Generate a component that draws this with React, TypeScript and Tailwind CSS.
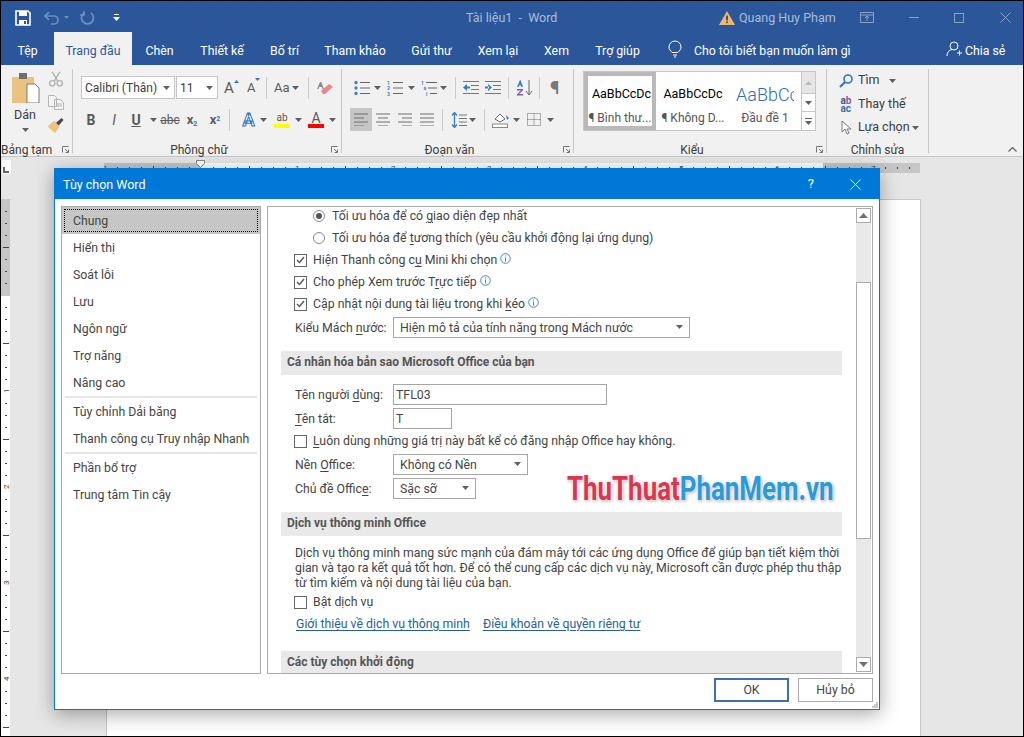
import React from "react";

const F = "font-['Roboto','Noto_Sans',sans-serif]";

function Caret({ c = "#5f5f5f" }: { c?: string }) {
  return <svg width="7" height="4" viewBox="0 0 7 4" className="shrink-0"><path d="M0 0h7L3.5 4z" fill={c} /></svg>;
}

function TitleBar() {
  return (
    <div className="flex h-[31px] items-center bg-[#2b579a] pt-[2px] text-[12.5px] text-[#a9bdd8]">
      <svg width="16" height="16" viewBox="0 0 16 16" className="ml-[14px] shrink-0"><path d="M1 1h12l2 2v12H1z" fill="none" stroke="#fff" strokeWidth="1.6" /><rect x="4" y="1" width="8" height="5" fill="#fff" /><rect x="4" y="10" width="8" height="5" fill="#fff" /><rect x="9" y="11" width="2" height="3" fill="#2b579a" /></svg>
      <svg width="16" height="14" viewBox="0 0 16 14" className="ml-[13px] shrink-0"><path d="M5 1 1 5l4 4M1 5h9a4 4 0 0 1 0 8H7" fill="none" stroke="#6f8fbd" strokeWidth="1.7" /></svg>
      <svg width="5" height="3" viewBox="0 0 5 3" className="ml-[4px] shrink-0"><path d="M0 0h5L2.5 3z" fill="#6f8fbd" /></svg>
      <svg width="15" height="15" viewBox="0 0 15 15" className="ml-[11px] shrink-0"><path d="M4 3a6 6 0 1 0 7 0M4 1v4H0" fill="none" stroke="#6f8fbd" strokeWidth="1.7" /></svg>
      <svg width="7" height="7" viewBox="0 0 7 7" className="ml-[18px] shrink-0"><path d="M1 0h5v1H1zM0 3h7L3.5 7z" fill="#fff" /></svg>
      <div className="w-[346px] shrink-0" />
      <span className="w-[88px] shrink-0 whitespace-nowrap pt-[2px]">Tài liệu1&nbsp; -&nbsp; Word</span>
      <div className="w-[165px] shrink-0" />
      <svg width="16" height="14" viewBox="0 0 16 14" className="shrink-0"><path d="M8 0l8 14H0z" fill="#e9b872" /><rect x="7.2" y="4.5" width="1.6" height="5" fill="#3a3a3a" /><rect x="7.2" y="10.5" width="1.6" height="1.6" fill="#3a3a3a" /></svg>
      <span className="ml-[4px] w-[96px] shrink-0 whitespace-nowrap pt-[2px]">Quang Huy Phạm</span>
      <svg width="14" height="11" viewBox="0 0 14 11" className="ml-[25px] shrink-0"><path d="M.5.5h13v10H.5zM.5 3h13M7 9V4.5M5 6l2-2 2 2" fill="none" stroke="#88a3c9" /></svg>
      <div className="ml-[35px] h-px w-[10px] shrink-0 bg-[#88a3c9]" />
      <div className="ml-[35px] h-[10px] w-[10px] shrink-0 border border-[#88a3c9]" />
      <svg width="11" height="11" viewBox="0 0 11 11" className="ml-[36px] shrink-0"><path d="M.5.5l10 10M10.5.5l-10 10" stroke="#88a3c9" /></svg>
    </div>
  );
}

const tabs: [string, number][] = [["Tệp", 53], ["Trang đầu", 78], ["Chèn", 55], ["Thiết kế", 70], ["Bố trí", 55], ["Tham khảo", 86], ["Gửi thư", 67], ["Xem lại", 66], ["Xem", 51], ["Trợ giúp", 71]];

function TabRow() {
  return (
    <div className="flex h-[33px] bg-[#2b579a] text-[12.3px] text-white">
      {tabs.map(([t, w]) => (
        <div key={t} style={{ width: w }} className={"flex items-center justify-center whitespace-nowrap pt-[5px] " + (t === "Trang đầu" ? "bg-[#f1f1f1] text-[#2b579a]" : "")}>{t}</div>
      ))}
      <svg width="14" height="18" viewBox="0 0 14 18" className="ml-[15px] mt-[8px] shrink-0"><path d="M4 12.5C2.5 10.5 1 9.5 1 7a6 6 0 0 1 12 0c0 2.5-1.5 3.5-3 5.5zM5 15h4M6 17h2" fill="none" stroke="#fff" /></svg>
      <span className="ml-[12px] flex w-[252px] shrink-0 items-center whitespace-nowrap pt-[5px]">Cho tôi biết bạn muốn làm gì</span>
      <svg width="16" height="16" viewBox="0 0 16 16" className="mt-[9px] shrink-0"><circle cx="8" cy="5" r="4" fill="none" stroke="#fff" /><path d="M1 15c0-4 2-6 5-6.5M11 12h5M13.5 9.5v5" fill="none" stroke="#fff" /></svg>
      <span className="ml-[3px] flex items-center whitespace-nowrap pt-[5px]">Chia sẻ</span>
    </div>
  );
}

function Sep() {
  return <div className="mb-[3px] mt-[4px] w-px shrink-0 bg-[#c6c6c6]" />;
}
function MiniSep({ className = "" }: { className?: string }) {
  return <div className={"mx-[4px] h-[22px] w-px shrink-0 bg-[#c9c9c9] " + className} />;
}
function Launcher() {
  return <svg width="7" height="7" viewBox="0 0 7 7" className="absolute bottom-[3px] right-[3px]"><path d="M.5 6.5v-6h6M3 3l3.5 3.5M6.5 3.5v3h-3" fill="none" stroke="#777" /></svg>;
}
function G({ w, label, children, launcher = true, className = "", labelClass = "right-[16px]" }: { w: number; label: string; children: React.ReactNode; launcher?: boolean; className?: string; labelClass?: string }) {
  return (
    <div style={{ width: w }} className={"relative h-full shrink-0 " + className}>
      {children}
      <div className={"absolute -bottom-px left-0 whitespace-nowrap text-center text-[12px] leading-[14px] text-[#3c3c3c] " + labelClass}>{label}</div>
      {launcher && <Launcher />}
    </div>
  );
}

function Clipboard() {
  return (
    <G w={71} label="Bảng tạm" className="flex" labelClass="right-[22px]">
      <div className="ml-[9px] mt-[8px] flex w-[30px] flex-col items-center">
        <svg width="29" height="30" viewBox="0 0 29 30"><path d="M1 4h22v26H1z" fill="#e9c37f" /><rect x="8" y="0" width="8" height="6" fill="#6f6f6f" /><path d="M16 11h8l4 4v15H16z" fill="#fff" stroke="#7a7a7a" /></svg>
        <span className="mt-[3px] text-[12.5px] leading-[17px] text-[#3c3c3c]">Dán</span>
        <div className="mt-[5px]"><Caret /></div>
      </div>
      <div className="ml-[7px] mt-[6px] flex flex-col items-center gap-[8px]">
        <svg width="16" height="16" viewBox="0 0 16 17"><path d="M4 1l6 10M12 1L6 11" stroke="#b5b5b5" strokeWidth="1.6" fill="none" /><circle cx="4" cy="13" r="2.8" fill="none" stroke="#b5b5b5" strokeWidth="1.5" /><circle cx="12" cy="13" r="2.8" fill="none" stroke="#b5b5b5" strokeWidth="1.5" /></svg>
        <svg width="16" height="15" viewBox="0 0 16 15"><path d="M.5.5h6l2 2v9h-8zM6.5 4.5h6l3 3v7h-9z" fill="#f4f4f4" stroke="#b5b5b5" /><path d="M8 9h6M8 11h6" stroke="#b5b5b5" /></svg>
        <svg width="17" height="15" viewBox="0 0 17 16"><path d="M0 9l7-6 6 6-5 7z" fill="#e9c37f" /><path d="M9 5l6-5 2 2-5 6z" fill="#4a4a4a" /></svg>
      </div>
    </G>
  );
}

function FontGroup() {
  return (
    <G w={268} label="Phông chữ">
      <div className="ml-[8px] mt-[11px] flex h-[23px] items-center">
        <div className="flex h-[23px] w-[94px] shrink-0 items-center justify-between border border-[#c6c6c6] bg-white pl-[3px] pr-[4px] text-[12px] text-[#3c3c3c]"><span className="whitespace-nowrap">Calibri (Thân)</span><Caret /></div>
        <div className="ml-[1px] flex h-[23px] w-[42px] shrink-0 items-center justify-between border border-[#c6c6c6] bg-white pl-[3px] pr-[4px] text-[12px] text-[#3c3c3c]"><span>11</span><Caret /></div>
        <div className="ml-[6px] flex w-[20px] shrink-0 items-start text-[15px] leading-[18px] text-[#5a5a5a]">A<svg width="5" height="3" viewBox="0 0 5 3" className="mt-[1px]"><path d="M0 3h5L2.5 0z" fill="#2f77c4" /></svg></div>
        <div className="ml-[3px] flex w-[16px] shrink-0 items-start text-[13px] leading-[20px] text-[#5a5a5a]">A<svg width="5" height="3" viewBox="0 0 5 3"><path d="M0 0h5L2.5 3z" fill="#2f77c4" /></svg></div>
        <MiniSep className="ml-[3px]" />
        <span className="ml-[3px] w-[17px] shrink-0 text-[13px] text-[#5a5a5a]">Aa</span>
        <div className="ml-[1px]"><Caret /></div>
        <MiniSep className="ml-[9px]" />
        <svg width="16" height="16" viewBox="0 0 16 16" className="ml-[4px] shrink-0"><path d="M3 2L0 9h1.5l.7-2h2.6l.7 2H7L4.2 2z" fill="#8a8a8a" /><path d="M4 11l8-7 4 3-8 7H6z" fill="#e68890" /></svg>
      </div>
      <div className="ml-[8px] mt-[9px] flex h-[23px] items-center text-[#5a5a5a]">
        <span className="w-[20px] shrink-0 text-center text-[14px] font-bold leading-none">B</span>
        <span className="ml-[3px] w-[20px] shrink-0 text-center text-[14px] italic leading-none">I</span>
        <span className="ml-[2px] w-[20px] shrink-0 text-center text-[14px] font-bold leading-none underline">U</span>
        <div className="ml-[4px]"><Caret /></div>
        <span className="ml-[2px] w-[22px] shrink-0 text-center text-[12px] leading-none line-through">abc</span>
        <span className="ml-[1px] w-[20px] shrink-0 text-center text-[13px] font-bold leading-none">x<sub className="text-[7px] text-[#2f77c4]">2</sub></span>
        <span className="ml-[3px] w-[20px] shrink-0 text-center text-[13px] font-bold leading-none">x<sup className="text-[7px] text-[#2f77c4]">2</sup></span>
        <MiniSep />
        <span className="ml-[5px] w-[19px] shrink-0 text-center text-[18px] font-bold leading-none text-white [-webkit-text-stroke:1px_#2f77c4]">A</span>
        <div className="ml-[2px]"><Caret /></div>
        <div className="ml-[7px] flex w-[16px] shrink-0 flex-col items-center"><span className="text-[10px] leading-[11px]">ab</span><div className="mt-[1px] h-[4px] w-[16px] bg-[#ffff00]" /></div>
        <div className="ml-[5px]"><Caret /></div>
        <div className="ml-[6px] flex w-[16px] shrink-0 flex-col items-center"><span className="text-[14px] leading-[12px]">A</span><div className="h-[4px] w-[16px] bg-[#ff0000]" /></div>
        <div className="ml-[5px]"><Caret /></div>
      </div>
    </G>
  );
}

function Lines({ kind }: { kind: "l" | "c" | "r" | "j" }) {
  const rows = [14, 10, 14, 10];
  return (
    <svg width="14" height="13" viewBox="0 0 14 13">
      {rows.map((r, i) => {
        const w = kind === "j" ? 14 : r;
        const x = kind === "c" ? (14 - w) / 2 : kind === "r" ? 14 - w : 0;
        return <rect key={i} x={x} y={i * 4 + 0.5} width={w} height="1" fill="#6e6e6e" />;
      })}
    </svg>
  );
}
function ListIcon({ kind }: { kind: "b" | "n" | "m" }) {
  const dots = kind === "n" ? ["1", "2", "3"] : ["1", "a", "i"];
  return (
    <svg width="16" height="16" viewBox="0 0 16 16" className="shrink-0">
      {[0, 1, 2].map((i) => kind === "b"
        ? <circle key={i} cx="2" cy={2.5 + i * 5.5} r="1.7" fill="#4a7fb8" />
        : <text key={i} x={kind === "m" ? i * 2.5 : 0} y={4.5 + i * 5.5} fontSize="5" fontWeight="bold" fill="#3f7cc0">{dots[i]}</text>)}
      {[0, 1, 2].map((i) => <rect key={i} x={kind === "m" ? 5 + i * 2 : 6} y={2 + i * 5.5} width={kind === "m" ? 11 - i * 2 : 10} height="1" fill="#666" />)}
    </svg>
  );
}

function Paragraph() {
  return (
    <G w={231} label="Đoạn văn">
      <div className="ml-[12px] mt-[11px] flex h-[23px] items-center">
        <ListIcon kind="b" /><div className="ml-[4px]"><Caret /></div>
        <div className="ml-[6px]"><ListIcon kind="n" /></div><div className="ml-[5px]"><Caret /></div>
        <div className="ml-[6px]"><ListIcon kind="m" /></div><div className="ml-[3px]"><Caret /></div>
        <MiniSep className="ml-[8px]" />
        <svg width="16" height="13" viewBox="0 0 16 13" className="ml-[3px] shrink-0"><path d="M0 .5h16M8 4.5h8M8 8.5h8M0 12.5h16" stroke="#777" /><path d="M0 6.5l4-3.5v7zM3 5.5h4v2H3z" fill="#3f7cc0" /></svg>
        <svg width="16" height="13" viewBox="0 0 16 13" className="ml-[6px] shrink-0"><path d="M0 .5h16M8 4.5h8M8 8.5h8M0 12.5h16" stroke="#777" /><path d="M7 6.5L3 3v7zM0 5.5h4v2H0z" fill="#3f7cc0" /></svg>
        <MiniSep className="ml-[7px]" />
        <svg width="16" height="16" viewBox="0 0 16 16" className="ml-[4px] shrink-0"><path d="M3 0L0 7h1.5l.5-1.5h2L4.5 7H6L3.5 0z" fill="#3f7cc0" /><path d="M0 9h6v1.2L2 14h4v1.5H0v-1.2L4 10.5H0z" fill="#8a57a8" /><path d="M12 0v14M9 11l3 4 3-4" fill="none" stroke="#666" /></svg>
        <MiniSep className="ml-[6px]" />
        <span className="ml-[6px] text-[19px] font-bold leading-none text-[#777]">¶</span>
      </div>
      <div className="ml-[8px] mt-[9px] flex h-[23px] items-center">
        <div className="flex h-[23px] w-[22px] shrink-0 items-center justify-center bg-[#c6c6c6]"><Lines kind="l" /></div>
        <div className="flex h-[23px] w-[22px] shrink-0 items-center justify-center"><Lines kind="c" /></div>
        <div className="flex h-[23px] w-[22px] shrink-0 items-center justify-center"><Lines kind="r" /></div>
        <div className="flex h-[23px] w-[22px] shrink-0 items-center justify-center"><Lines kind="j" /></div>
        <MiniSep />
        <svg width="16" height="16" viewBox="0 0 16 16" className="ml-[4px] shrink-0"><path d="M3.5 1v14M1 3.5l2.5-3 2.5 3M1 12.5l2.5 3 2.5-3" fill="none" stroke="#3f7cc0" strokeWidth="1.3" /><path d="M8 3h8M8 6.5h8M8 10h8M8 13.5h8" stroke="#777" /></svg>
        <div className="ml-[2px]"><Caret /></div>
        <MiniSep className="ml-[8px]" />
        <svg width="17" height="16" viewBox="0 0 17 16" className="ml-[3px] shrink-0"><path d="M3 7l5-5 5 5-5 3z" fill="#fff" stroke="#666" /><path d="M14 3l3 3-2 2z" fill="#3f7cc0" /><rect x=".5" y="12" width="15" height="3.5" fill="#fff" stroke="#888" /></svg>
        <div className="ml-[4px]"><Caret /></div>
        <svg width="14" height="13" viewBox="0 0 14 13" className="ml-[7px] shrink-0"><path d="M.5.5h13v12H.5zM7 .5v12M.5 6.5h13" fill="none" stroke="#666" strokeDasharray="1 1" /></svg>
        <div className="ml-[6px]"><Caret /></div>
      </div>
    </G>
  );
}

function Styles() {
  return (
    <G w={252} label="Kiểu">
      <div className="ml-[9px] mt-[6px] flex h-[60px] w-[233px] border border-[#c6c6c6] bg-white">
        <div className="flex h-[58px] w-[72px] shrink-0 flex-col items-center overflow-hidden border-[4px] border-[#b9b9b9] pt-[1px]">
          <div className="flex h-[34px] w-full shrink-0 items-center justify-center overflow-hidden whitespace-nowrap pl-[3px] text-[12.5px] text-black">AaBbCcDc</div>
          <div className="whitespace-nowrap text-[12px] leading-[14px] text-[#555]">¶ Bình thư...</div>
        </div>
        <div className="flex h-[58px] w-[74px] shrink-0 flex-col items-center overflow-hidden pt-[6px]">
          <div className="flex h-[32px] w-full shrink-0 items-center justify-center overflow-hidden whitespace-nowrap text-[12.5px] text-black">AaBbCcDc</div>
          <div className="whitespace-nowrap text-[12px] leading-[17px] text-[#555]">¶ Không D...</div>
        </div>
        <div className="flex h-[58px] w-[70px] shrink-0 flex-col items-center overflow-hidden pt-[6px]">
          <div className="flex h-[32px] w-[58px] shrink-0 items-center overflow-hidden whitespace-nowrap text-[18px] font-light text-[#2f6eb5]">AaBbCcD</div>
          <div className="whitespace-nowrap text-[12px] leading-[17px] text-[#555]">Đầu đề 1</div>
        </div>
        <div className="ml-auto flex w-[14px] shrink-0 flex-col">
          <div className="flex h-[21px] items-center justify-center border-l border-[#c6c6c6] bg-[#e6e6e6]"><svg width="7" height="4" viewBox="0 0 7 4"><path d="M0 4h7L3.5 0z" fill="#bbb" /></svg></div>
          <div className="flex h-[18px] items-center justify-center border-l border-t border-[#c6c6c6]"><Caret /></div>
          <div className="flex h-[19px] flex-col items-center justify-center gap-[2px] border-l border-t border-[#c6c6c6]"><div className="h-px w-[7px] bg-[#5f5f5f]" /><Caret /></div>
        </div>
      </div>
    </G>
  );
}

function EditRow({ icon, label, tail }: { icon: React.ReactNode; label: string; tail?: number }) {
  return (
    <div className="flex h-[23px] items-center text-[12.5px] text-[#3c3c3c]">
      <div className="flex w-[18px] shrink-0 justify-center">{icon}</div>
      <span className="ml-[3px] whitespace-nowrap">{label}</span>
      {tail !== undefined && <div style={{ marginLeft: tail }}><Caret /></div>}
    </div>
  );
}

function Editing() {
  return (
    <G w={101} label="Chỉnh sửa" launcher={false} labelClass="right-0">
      <div className="ml-[10px] mt-[4px] flex flex-col">
        <EditRow label="Tìm" tail={9} icon={<svg width="14" height="14" viewBox="0 0 14 14"><circle cx="9" cy="5" r="4" fill="none" stroke="#2f77c4" strokeWidth="1.6" /><path d="M6 8l-5 5" stroke="#2f77c4" strokeWidth="2.2" /></svg>} />
        <div className="h-px" />
        <EditRow label="Thay thế" icon={<div className="flex flex-col text-[10px] font-bold"><div className="h-[8px] leading-[8px]"><span className="text-[#3a5a80]">a</span><span className="text-[#8a57a8]">b</span></div><div className="h-[8px] leading-[8px] text-[#3a6fb0]">ac</div></div>} />
        <EditRow label="Lựa chọn" tail={2} icon={<svg width="11" height="15" viewBox="0 0 11 15"><path d="M1 1v11l3-3 2 5 2-1-2-4h4z" fill="#fff" stroke="#777" /></svg>} />
      </div>
    </G>
  );
}

function Ribbon() {
  return (
    <div className="relative flex h-[92px] border-b border-[#c6c6c6] bg-[#f1f1f1]">
      <Clipboard /><Sep />
      <FontGroup /><Sep />
      <Paragraph /><Sep />
      <Styles /><Sep />
      <Editing /><Sep />
      <svg width="9" height="5" viewBox="0 0 9 5" className="absolute bottom-[4px] left-[1007px]"><path d="M.5 4.5l4-4 4 4" fill="none" stroke="#666" strokeWidth="1.3" /></svg>
    </div>
  );
}

function Ruler() {
  const ticks = Array.from({ length: 68 }, (_, i) => i - 8);
  return (
    <div className="relative flex h-[42px] bg-[#e6e6e6]">
      <div className="ml-px mt-[3px] flex h-[14px] w-[9px] shrink-0 items-end bg-white pb-[1px] pl-[1px]">
        <svg width="6" height="6" viewBox="0 0 6 6"><path d="M0 0h2v4h4v2H0z" fill="#666" /></svg>
      </div>
      <svg width="816" height="10" viewBox="0 0 816 10" className="ml-[93px] mt-[6px] shrink-0">
        <rect width="816" height="10" fill="#fff" />
        <rect width="97" height="10" fill="#c6c6c6" />
        <rect x="719" width="97" height="10" fill="#c6c6c6" />
        {ticks.map((k) => {
          const x = 97 + k * 12;
          if (k % 8 === 0) return k === 0 ? null : <text key={k} x={x - 2} y="8" fontSize="8" fill="#444">{Math.abs(k / 8)}</text>;
          const long = k % 4 === 0;
          return <rect key={k} x={x} y={long ? 3 : 4} width="1" height={long ? 4 : 2} fill="#444" />;
        })}
      </svg>
      <svg width="9" height="8" viewBox="0 0 9 8" className="absolute left-[195px] top-[3px]"><path d="M.5.5h8v3l-4 4-4-4z" fill="#fff" stroke="#888" /></svg>
    </div>
  );
}

function DocArea() {
  const ticks = Array.from({ length: 44 }, (_, i) => i - 7);
  return (
    <div className="flex h-[540px] overflow-hidden bg-[#e6e6e6]">
      <svg width="9" height="540" viewBox="0 0 9 540" className="shrink-0">
        <rect width="9" height="540" fill="#fff" />
        <rect width="9" height="97" fill="#c6c6c6" />
        {ticks.map((k) => {
          const y = 96 + k * 12;
          if (k === 0) return null;
          if (k % 8 === 0) return <text key={k} x="0" y="0" fontSize="8" fill="#444" transform={`translate(8 ${y + 2}) rotate(-90)`}>{Math.abs(k / 8)}</text>;
          const long = k % 4 === 0;
          return <rect key={k} x={long ? 2 : 4} y={y} width={long ? 6 : 2} height="1" fill="#444" />;
        })}
      </svg>
      <div className="ml-[96px] h-[600px] w-[815px] shrink-0 border border-[#c6c6c6] bg-white" />
    </div>
  );
}

function NavItem({ t }: { t: string }) {
  return <div className="flex h-[27px] items-center whitespace-nowrap pl-[11px] pt-[2px] text-[12.3px] text-[#444]">{t}</div>;
}
function NavSep() {
  return <div className="mx-[3px] h-[2px] bg-[#e6e6e6]" />;
}
function Check({ on = false }: { on?: boolean }) {
  return (
    <div className="flex h-[13px] w-[13px] shrink-0 items-center justify-center border border-[#666] bg-white">
      {on && <svg width="9" height="8" viewBox="0 0 9 8"><path d="M1 4l2.5 2.5L8 1" fill="none" stroke="#555" strokeWidth="1.4" /></svg>}
    </div>
  );
}
function Radio({ on = false }: { on?: boolean }) {
  return (
    <div className="flex h-[12px] w-[12px] shrink-0 items-center justify-center rounded-full border border-[#8a8a8a] bg-white">
      {on && <div className="h-[6px] w-[6px] rounded-full bg-[#555]" />}
    </div>
  );
}
function Info() {
  return <svg width="11" height="11" viewBox="0 0 11 11" className="-mt-[3px] ml-[3px] shrink-0"><circle cx="5.5" cy="5.5" r="4.8" fill="none" stroke="#3f87cf" /><path d="M5.5 2.5v1M5.5 4.5v4" stroke="#3f87cf" /></svg>;
}
function U({ children }: { children: React.ReactNode }) {
  return <span className="underline underline-offset-2">{children}</span>;
}
function Select({ w, t }: { w: number; t: string }) {
  return (
    <div style={{ width: w }} className="flex h-[21px] shrink-0 items-center justify-between border border-[#a6a6a6] bg-white pl-[6px] pr-[6px]">
      <span className="whitespace-nowrap pt-[2px]">{t}</span><Caret />
    </div>
  );
}
function Section({ t }: { t: string }) {
  return <div className="ml-[13px] flex h-[24px] w-[561px] shrink-0 items-center bg-[#e9e9e9] pb-[2px] pl-[6px] text-[12px] font-bold text-[#555]">{t}</div>;
}
function Row({ children, h = 22, ml = 26, className = "" }: { children: React.ReactNode; h?: number; ml?: number; className?: string }) {
  return <div style={{ height: h, marginLeft: ml }} className={"flex shrink-0 items-center whitespace-nowrap " + className}>{children}</div>;
}
function Label({ children, w = 98 }: { children: React.ReactNode; w?: number }) {
  return <div style={{ width: w }} className="ml-px shrink-0 pt-[2px]">{children}</div>;
}

function Options() {
  return (
    <div className="-mt-[3px] flex min-w-0 flex-1 flex-col text-[12.3px] text-[#444]">
      <Row ml={45} className="pt-[2px]"><Radio on /><span className="ml-[7px]">Tối ưu hóa để có <U>g</U>iao diện đẹp nhất</span></Row>
      <Row ml={45} className="pt-[2px]"><Radio /><span className="ml-[7px]">Tối ưu hóa để <U>t</U>ương thích (yêu cầu khởi động lại ứng dụng)</span></Row>
      <Row className="pt-[2px]"><Check on /><span className="ml-[6px]">Hiện Thanh công c<U>ụ</U> Mini khi chọn</span><Info /></Row>
      <Row className="pt-[2px]"><Check on /><span className="ml-[6px]">Cho phép Xem trước T<U>r</U>ực tiếp</span><Info /></Row>
      <Row className="pt-[2px]"><Check on /><span className="ml-[6px]">Cập nhật nội dung tài liệu trong khi <U>k</U>éo</span><Info /></Row>
      <Row h={26}><Label w={98}>Kiểu Mách <U>n</U>ước:</Label><Select w={297} t="Hiện mô tả của tính năng trong Mách nước" /></Row>
      <div className="h-[11px] shrink-0" />
      <Section t="Cá nhân hóa bản sao Microsoft Office của bạn" />
      <div className="h-[7px] shrink-0" />
      <Row h={24}><Label><span>Tên người <U>d</U>ùng:</span></Label><div className="flex h-[21px] w-[214px] items-center border border-[#a6a6a6] pl-[2px]"><span className="pt-[2px]">TFL03</span></div></Row>
      <Row h={24}><Label><span><U>T</U>ên tắt:</span></Label><div className="flex h-[21px] w-[59px] items-center border border-[#a6a6a6] pl-[2px]"><span className="pt-[2px]">T</span></div></Row>
      <Row h={20} className="pt-[2px]"><Check /><span className="ml-[6px]"><U>L</U>uôn dùng những giá trị này bất kể có đăng nhập Office hay không.</span></Row>
      <Row h={28}><Label>Nền <U>O</U>ffice:</Label><Select w={135} t="Không có Nền" /></Row>
      <Row h={20}><Label>Chủ đề Offic<U>e</U>:</Label><Select w={83} t="Sặc sỡ" /></Row>
      <div className="h-[14px] shrink-0" />
      <Section t="Dịch vụ thông minh Office" />
      <div className="ml-[27px] mt-[10px] w-[548px] shrink-0 leading-[15px]">
        Dịch vụ thông minh mang sức mạnh của đám mây tới các ứng dụng Office để giúp bạn tiết kiệm thời gian và tạo ra kết quả tốt hơn. Để có thể cung cấp các dịch vụ này, Microsoft cần được phép thu thập từ tìm kiếm và nội dung tài liệu của bạn.
      </div>
      <Row h={20} className="pt-[2px]"><Check /><span className="ml-[6px]">Bật dịch vụ</span></Row>
      <div className="ml-[28px] mt-[2px] flex h-[20px] shrink-0 items-center gap-[13px] whitespace-nowrap pt-[2px] text-[#2a6099] underline underline-offset-2">
        <span>Giới thiệu về dịch vụ thông minh</span><span>Điều khoản về quyền riêng tư</span>
      </div>
      <div className="h-[18px] shrink-0" />
      <Section t="Các tùy chọn khởi động" />
    </div>
  );
}

function Scrollbar() {
  return (
    <div className="my-px mr-px flex w-[15px] shrink-0 flex-col bg-[#e9e9e9]">
      <div className="flex h-[15px] shrink-0 items-center justify-center border border-[#ababab] bg-white"><svg width="9" height="5" viewBox="0 0 9 5"><path d="M0 5h9L4.5 0z" fill="#707070" /></svg></div>
      <div className="h-[59px] shrink-0" />
      <div className="h-[257px] shrink-0 border border-[#ababab] bg-white" />
      <div className="flex-1" />
      <div className="flex h-[15px] shrink-0 items-center justify-center border border-[#ababab] bg-white"><svg width="9" height="5" viewBox="0 0 9 5"><path d="M0 0h9L4.5 5z" fill="#707070" /></svg></div>
    </div>
  );
}

function Dialog() {
  return (
    <div className="absolute left-[53px] top-[167px] flex h-[542px] w-[826px] flex-col border border-[#0078d7] bg-white shadow-[0_4px_18px_rgba(0,0,0,0.35)]">
      <div className="flex h-[30px] shrink-0 items-center bg-[#0078d7] pl-[8px] text-[12.5px] text-white">
        <span className="flex-1 pt-[2px]">Tùy chọn Word</span>
        <span className="mr-[36px] text-[13px]">?</span>
        <svg width="11" height="11" viewBox="0 0 11 11" className="mr-[18px]"><path d="M.5.5l10 10M10.5.5l-10 10" stroke="#fff" /></svg>
      </div>
      <div className="mx-[6px] mt-[7px] flex h-[468px] shrink-0 gap-[6px]">
        <div className="flex h-full w-[200px] shrink-0 flex-col border border-[#ababab]">
          <div className="h-[27px] shrink-0 bg-[#c6c6c6] p-[2px]">
            <div className="flex h-full items-center whitespace-nowrap border border-dotted border-black pl-[8px] pt-[2px] text-[12.3px] text-[#444]">Chung</div>
          </div>
          {["Hiển thị", "Soát lỗi", "Lưu", "Ngôn ngữ", "Trợ năng", "Nâng cao"].map((t) => <NavItem key={t} t={t} />)}
          <NavSep />
          {["Tùy chỉnh Dải băng", "Thanh công cụ Truy nhập Nhanh"].map((t) => <NavItem key={t} t={t} />)}
          <NavSep />
          {["Phần bổ trợ", "Trung tâm Tin cậy"].map((t) => <NavItem key={t} t={t} />)}
        </div>
        <div className="flex h-full min-w-0 flex-1 overflow-hidden border border-[#ababab]">
          <Options />
          <Scrollbar />
        </div>
      </div>
      <div className="relative mr-[6px] mt-[4px] flex justify-end gap-[9px] text-[12.3px] text-[#444]">
        <div className="flex h-[24px] w-[75px] items-center justify-center border-2 border-[#3e6db5]">OK</div>
        <div className="flex h-[24px] w-[75px] items-center justify-center border border-[#ababab]">Hủy bỏ</div>
      </div>
      <svg width="6" height="6" viewBox="0 0 6 6" className="absolute bottom-[1px] right-[1px]"><path d="M4 0h2v2H4zM2 2h2v2H2zM4 2h2v2H4zM0 4h2v2H0zM2 4h2v2H2zM4 4h2v2H4z" fill="#c8c8c8" /></svg>
    </div>
  );
}

function Watermark() {
  return (
    <div className="absolute left-[566px] top-[468px] origin-left scale-x-[0.785] whitespace-nowrap font-['Roboto','Noto_Sans',sans-serif] text-[33px] font-bold leading-[40px] [text-shadow:0_0_2px_#fff,0_0_3px_#fff,1px_1px_4px_rgba(0,0,0,0.45)]">
      <span className="text-[#dc3550]">ThuThuat</span><span className="text-[#2a9ad8]">PhanMem.vn</span>
    </div>
  );
}

export default function App() {
  return (
    <div className={"relative h-[737px] w-[1024px] overflow-hidden border border-black bg-[#e6e6e6] " + F}>
      <TitleBar />
      <TabRow />
      <Ribbon />
      <Ruler />
      <DocArea />
      <Dialog />
      <Watermark />
    </div>
  );
}
